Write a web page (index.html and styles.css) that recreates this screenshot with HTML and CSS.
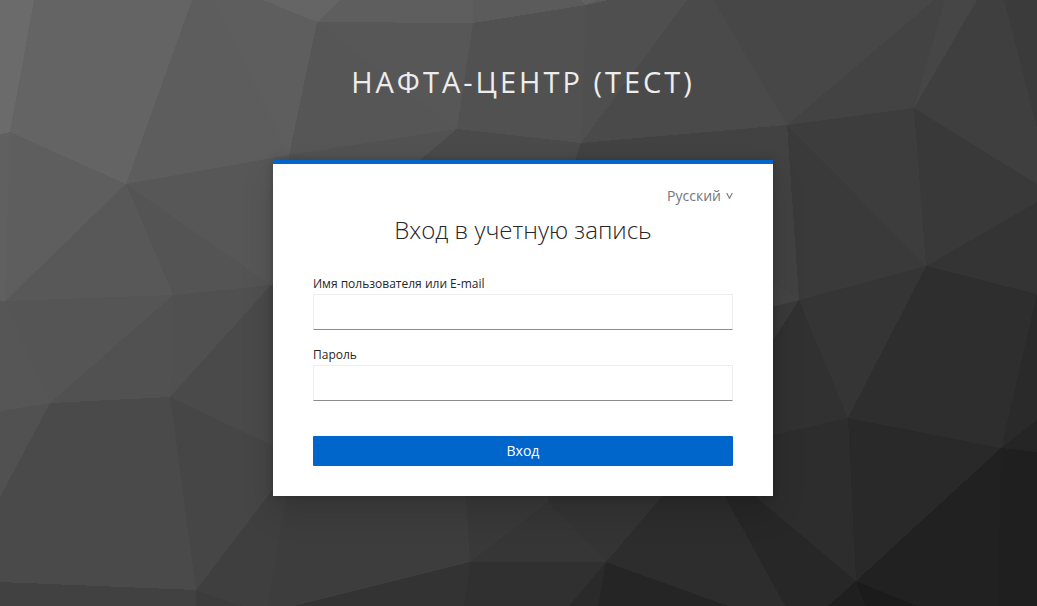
FILE: index.html
```html
<!DOCTYPE html>
<html lang="ru">
<head>
<meta charset="utf-8">
<title>Вход в учетную запись</title>
<link rel="stylesheet" href="styles.css">
</head>
<body>
<svg class="backdrop" viewBox="0 0 1037 606" aria-hidden="true">
  <path fill="#444" d="M0 0H1037V606H0z"/>
  <path fill="#6b6b6b" d="M0 0H34L10 132 0 134z"/>
  <path fill="#646464" d="M34 0H192L126 184 10 132z"/>
  <path fill="#5d5d5d" d="M192 0H213L289 155 126 184z"/>
  <path fill="#5e5e5e" d="M213 0H263L317 22 289 155z"/>
  <path fill="#656565" d="M263 0H341L317 22z"/>
  <path fill="#5e5e5e" d="M341 0H473V23L317 22z"/>
  <path fill="#5b5b5b" d="M473 0H608L586 5 473 23z"/>
  <path fill="#616161" d="M580 0H596L586 5z"/>
  <path fill="#575757" d="M317 22L473 23 457 129z"/>
  <path fill="#565656" d="M317 22L457 129 289 155z"/>
  <path fill="#515151" d="M473 23L586 5 581 143 457 129z"/>
  <path fill="#4f4f4f" d="M586 5L608 0H687L581 143z"/>
  <path fill="#4a4a4a" d="M687 0H713L787 125 581 143z"/>
  <path fill="#474747" d="M713 0H934L787 125z"/>
  <path fill="#434343" d="M934 0H945L914 108 787 125z"/>
  <path fill="#464646" d="M945 0H977L914 108z"/>
  <path fill="#3f3f3f" d="M977 0H1004L1037 128V184L914 108z"/>
  <path fill="#3b3b3b" d="M1004 0H1037V128z"/>
  <path fill="#525252" d="M289 155L457 129 420 160H289z"/>
  <path fill="#4a4a4a" d="M457 129L581 143 575 160H420z"/>
  <path fill="#424242" d="M581 143L787 125 799 300 760 275V160H575z"/>
  <path fill="#606060" d="M0 134L10 132 5 301H0z"/>
  <path fill="#5e5e5e" d="M10 132L126 184 5 301z"/>
  <path fill="#585858" d="M126 184L173 295 5 301z"/>
  <path fill="#545454" d="M126 184L271 285 173 295z"/>
  <path fill="#575757" d="M126 184L289 155V285H271z"/>
  <path fill="#565656" d="M0 301H5L50 403 0 411z"/>
  <path fill="#555" d="M5 301L173 295 50 403z"/>
  <path fill="#515151" d="M173 295L170 397 50 403z"/>
  <path fill="#505050" d="M173 295L271 285 170 397z"/>
  <path fill="#4a4a4a" d="M271 285H290V454L170 397z"/>
  <path fill="#515151" d="M0 411L50 403 0 497z"/>
  <path fill="#4a4a4a" d="M50 403L170 397 196 590 0 582V497z"/>
  <path fill="#464646" d="M170 397L290 454V467L196 590z"/>
  <path fill="#414141" d="M0 582L196 590V606H0z"/>
  <path fill="#3f3f3f" d="M196 590L290 467 268 606H243z"/>
  <path fill="#3c3c3c" d="M196 590L243 606H196z"/>
  <path fill="#3d3d3d" d="M290 467H466L470 562 294 606H268z"/>
  <path fill="#333" d="M294 606L470 562 464 606z"/>
  <path fill="#393939" d="M465 480H548V502L470 562z"/>
  <path fill="#363636" d="M470 562L548 502 606 562z"/>
  <path fill="#343434" d="M548 502V480H690L606 562z"/>
  <path fill="#303030" d="M470 562H606L569 606H464z"/>
  <path fill="#2a2a2a" d="M606 562L598 606H569z"/>
  <path fill="#252525" d="M606 562L728 606H598z"/>
  <path fill="#2d2d2d" d="M676 480H716L785 606H728L606 562z"/>
  <path fill="#272727" d="M716 480H736L856 581 828 606H785z"/>
  <path fill="#3d3d3d" d="M787 125L914 108 926 266z"/>
  <path fill="#3a3a3a" d="M787 125L926 266 799 300z"/>
  <path fill="#393939" d="M914 108L1037 184V202L926 266z"/>
  <path fill="#343434" d="M926 266L1037 202V297z"/>
  <path fill="#3a3a3a" d="M760 310L799 300 760 360z"/>
  <path fill="#353535" d="M799 300L926 266 848 418z"/>
  <path fill="#313131" d="M799 300L848 418 760 438V360z"/>
  <path fill="#2e2e2e" d="M926 266L1037 294 1001 448 848 418z"/>
  <path fill="#2a2a2a" d="M1037 294V420L1001 448z"/>
  <path fill="#252525" d="M1037 420V452L1001 448z"/>
  <path fill="#2d2d2d" d="M848 418L856 581 736 480 760 438z"/>
  <path fill="#292929" d="M848 418L1001 448 856 581z"/>
  <path fill="#212121" d="M1001 448L998 606H917L856 581z"/>
  <path fill="#1f1f1f" d="M1001 448L1037 452V606H998z"/>
  <path fill="#1f1f1f" d="M856 581L865 606H828z"/>
  <path fill="#1b1b1b" d="M856 581L917 606H865z"/>
</svg>
<main class="login">
  <h1 class="realm">Нафта-Центр (тест)</h1>
  <section class="card">
    <div class="locale">
      <a class="locale-link">Русский</a>
      <svg class="chevron" viewBox="0 0 7 6" aria-hidden="true"><path d="M.7 0L3.5 5.3 6.3 0"/></svg>
    </div>
    <h2 class="title">Вход в учетную запись</h2>
    <form class="form">
      <label class="label" for="username">Имя пользователя или E-mail</label>
      <input class="input" id="username" type="text">
      <label class="label" for="password">Пароль</label>
      <input class="input" id="password" type="password">
      <button class="submit" type="button">Вход</button>
    </form>
  </section>
</main>
</body>
</html>
```
FILE: styles.css
```css
* { box-sizing: border-box; }
body {
  margin: 0;
  height: 606px;
  display: grid;
  overflow: hidden;
  font-family: "Open Sans", "Noto Sans", sans-serif;
}
.backdrop, .login { grid-area: 1 / 1; }
.backdrop { width: 1037px; height: 606px; shape-rendering: crispEdges; }
.login {
  z-index: 1;
  display: flex;
  flex-direction: column;
  align-items: center;
  padding: 61px 0 0 9px;
}
.realm {
  margin: 0 0 58px;
  font-size: 29px;
  line-height: 41px;
  font-weight: 400;
  letter-spacing: 3px;
  text-transform: uppercase;
  white-space: nowrap;
  color: #ededed;
}
.card {
  width: 500px;
  height: 336px;
  padding: 21px 40px 30px;
  border-top: 4px solid #06c;
  background: #fff;
  box-shadow: 0 16px 32px rgba(3,3,3,.14), 0 0 8px rgba(3,3,3,.2);
}
.locale { display: flex; justify-content: flex-end; align-items: center; gap: 5px; }
.locale-link { font-size: 14px; line-height: 21px; color: #72767b; }
.chevron { width: 7px; height: 6px; fill: none; stroke: #72767b; stroke-width: 1.1; }
.title {
  margin: 8px 0 0;
  font-size: 24px;
  line-height: 32px;
  font-weight: 300;
  text-align: center;
  color: #262626;
}
.form { display: flex; flex-direction: column; margin-top: 29px; }
.label { height: 19px; font-size: 12px; line-height: 18px; color: #262626; }
.input {
  height: 36px;
  margin: 0 0 16px;
  padding: 0 8px;
  border: 1px solid #ededed;
  border-bottom-color: #8a8d90;
  border-radius: 0;
  background: #fff;
}
.submit {
  height: 30px;
  margin-top: 19px;
  padding: 0;
  border: 0;
  border-radius: 1px;
  background: #06c;
  color: #fff;
  font: 500 14px/30px "Open Sans", "Noto Sans", sans-serif;
}
```
